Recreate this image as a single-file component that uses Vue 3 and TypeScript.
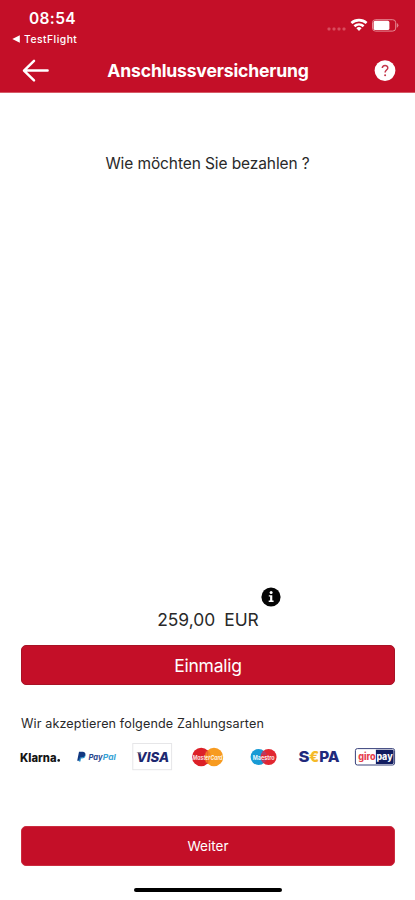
<script setup lang="ts">
import { ref } from 'vue'

const time = ref<string>('08:54')
const amount = ref<string>('259,00')
const currency = ref<string>('EUR')
</script>

<template>
  <main class="screen">
    <header class="header">
      <div class="status">
        <div class="status-left">
          <span class="time">{{ time }}</span>
          <span class="back-app">
            <svg width="8" height="8" viewBox="0 0 8 8"><path d="M0.3 4 7.8 .3V7.7Z" fill="#fff" /></svg>
            <span class="back-name">TestFlight</span>
          </span>
        </div>
        <svg class="indicators" width="74" height="16" viewBox="0 0 74 16">
          <g fill="#d94c5e">
            <rect x="1.5" y="11.5" width="3" height="3" rx="1" />
            <rect x="6.5" y="11.5" width="3" height="3" rx="1" />
            <rect x="11.5" y="11.5" width="3" height="3" rx="1" />
            <rect x="16.5" y="11.5" width="3" height="3" rx="1" />
          </g>
          <g fill="none" stroke="#fff" stroke-width="2.6">
            <path d="M25.4 7a11.4 11.4 0 0 1 15.2 0" />
            <path d="M28.4 10.2a6.9 6.9 0 0 1 9.2 0" />
          </g>
          <path d="M30.4 12.2a4 4 0 0 1 5.2 0L33 15Z" fill="#fff" />
          <rect x="46.5" y="3.7" width="23.2" height="11.4" rx="3" fill="none" stroke="#e58a94" />
          <rect x="47.6" y="4.8" width="15.8" height="9.2" rx="1.6" fill="#fff" />
          <path d="M71.2 7.5q2 1.8 0 3.8Z" fill="#e58a94" stroke="#e58a94" stroke-width=".6" />
        </svg>
      </div>
      <div class="nav">
        <svg width="28" height="24" viewBox="0 0 28 24">
          <path d="M13 1.8 3 11.6l10 9.8M3.2 11.6H26.6" fill="none" stroke="#fff" stroke-width="2.5" stroke-linecap="round" stroke-linejoin="round" />
        </svg>
        <h1 class="title">Anschlussversicherung</h1>
        <svg width="22" height="22" viewBox="0 0 22 22">
          <circle cx="11" cy="10.6" r="10.4" fill="#fff" />
          <path d="M8.3 8.1c.1-3.5 5.5-3.5 5.5-.2 0 2.1-2.7 2.2-2.7 4.5" fill="none" stroke="#c4354a" stroke-width="1.5" />
          <circle cx="11.1" cy="15.2" r="1" fill="#c4354a" />
        </svg>
      </div>
    </header>

    <p class="question">Wie möchten Sie bezahlen ?</p>

    <section class="payment">
      <div class="info">
        <svg width="20" height="20" viewBox="0 0 20 20">
          <circle cx="10" cy="10" r="9.6" fill="#050505" />
          <circle cx="10.1" cy="5.5" r="1.5" fill="#fff" />
          <path d="M7.8 8.2h3.5v5.4h1.3V15H7.7v-1.4h1.4V9.5H7.8Z" fill="#fff" />
        </svg>
      </div>
      <p class="price"><span>{{ amount }}</span><span>{{ currency }}</span></p>
      <button class="button once" type="button">Einmalig</button>
      <p class="accepted">Wir akzeptieren folgende Zahlungsarten</p>
      <div class="methods">
        <svg class="logo" viewBox="0 0 40 28">
          <text x="0" y="18.6" font-size="11.5" font-weight="800" fill="#151515" textLength="36.5" lengthAdjust="spacingAndGlyphs">Klarna</text>
          <circle cx="38.7" cy="17.4" r="1.3" fill="#151515" />
        </svg>
        <svg class="logo" viewBox="0 0 40 28">
          <path d="M3 8.8h4q3.2.5 2.2 3.7-.8 2.6-4.8 2.2l-.6 3H1.2Z" fill="#123881" />
          <path d="M9.4 11q.8 4.7-4.5 4.6l-.5 3H2.8l1.1-3.9Q8.6 15 9.4 11Z" fill="#168dcc" />
          <text x="12.5" y="17.2" font-size="7.4" font-style="italic" font-weight="700" fill="#27458d" textLength="14" lengthAdjust="spacingAndGlyphs">Pay</text>
          <text x="26.8" y="17.2" font-size="7.4" font-style="italic" font-weight="700" fill="#35a2d5" textLength="13" lengthAdjust="spacingAndGlyphs">Pal</text>
        </svg>
        <svg class="logo" viewBox="0 0 40 28">
          <rect x=".8" y=".5" width="38.8" height="26.2" fill="#fff" stroke="#e6e6e8" />
          <text x="4.6" y="19" font-size="13.6" font-style="italic" font-weight="800" fill="#1d2870" textLength="32.5" lengthAdjust="spacingAndGlyphs">VISA</text>
          <path d="M4.2 9h4l1.4 3.4Q7.6 10 4.2 9Z" fill="#8c8999" />
        </svg>
        <svg class="logo" viewBox="0 0 40 28">
          <circle cx="14.2" cy="14" r="9.2" fill="#dc2028" />
          <circle cx="27" cy="14" r="9.2" fill="#f79b20" />
          <path d="M20.5 7v14M18.5 9.1h4M17.8 11h5.5M17.8 17h5.5M18.5 19h4" stroke="#ed652b" stroke-width="1" />
          <text x="5.6" y="16.6" font-size="6.8" font-style="italic" font-weight="700" fill="#fff" fill-opacity=".85" textLength="30" lengthAdjust="spacingAndGlyphs">MasterCard</text>
        </svg>
        <svg class="logo" viewBox="0 0 40 28">
          <circle cx="15.6" cy="14" r="8" fill="#189bd5" />
          <circle cx="25.6" cy="14" r="8" fill="#e12731" />
          <path d="M18.8 9.2h3.6M17.8 11h5.6M17.8 17h5.6M18.8 18.8h3.6" stroke="#8654a1" stroke-width=".8" />
          <text x="9.8" y="16.5" font-size="6.8" font-weight="700" fill="#fff" fill-opacity=".9" textLength="21.8" lengthAdjust="spacingAndGlyphs">Maestro</text>
        </svg>
        <svg class="logo" viewBox="0 0 40 28">
          <g font-size="15" font-weight="800" fill="#20297b">
            <text x="-.6" y="19.4" textLength="11" lengthAdjust="spacingAndGlyphs">S</text>
            <text x="10" y="19.4" fill="#f5ba28" textLength="10.2" lengthAdjust="spacingAndGlyphs">€</text>
            <text x="20.2" y="19.4" textLength="20.5" lengthAdjust="spacingAndGlyphs">PA</text>
          </g>
        </svg>
        <svg class="logo" viewBox="0 0 40 28">
          <rect x=".4" y="5.6" width="39.2" height="16.4" rx="2" fill="#fff" stroke="#39427b" />
          <path d="M20.9 6.7h16.5q1.2 0 1.2 1.2v11.8q0 1.2-1.2 1.2H20.9Z" fill="#111c60" />
          <text x="3.2" y="16.8" font-size="9.2" font-weight="800" fill="#e6404d" textLength="17.5" lengthAdjust="spacingAndGlyphs">giro</text>
          <text x="21.4" y="16.8" font-size="9.2" font-weight="800" fill="#fff" textLength="16.2" lengthAdjust="spacingAndGlyphs">pay</text>
        </svg>
      </div>
    </section>

    <footer class="footer">
      <button class="button next" type="button">Weiter</button>
      <div class="home-bar"></div>
    </footer>
  </main>
</template>

<style>
body {
  background: #fff;
}
</style>

<style scoped>
.screen {
  box-sizing: border-box;
  width: 100%;
  height: 900px;
  display: flex;
  flex-direction: column;
  overflow: hidden;
  background: #fff;
  color: #292929;
  font-family: Inter, "Liberation Sans", sans-serif;
}
svg {
  display: block;
  flex: none;
}
p,
h1 {
  margin: 0;
  font-weight: 400;
  white-space: nowrap;
}
.header {
  box-sizing: border-box;
  height: 93px;
  flex: none;
  background: #c40f28;
  border-bottom: 1px solid #d65b67;
  color: #fff;
}
.status {
  height: 48px;
  display: flex;
  justify-content: space-between;
  padding: 0 15px 0 12px;
}
.status-left {
  display: flex;
  flex-direction: column;
  padding-top: 9px;
}
.time {
  padding-left: 17px;
  font-size: 15.5px;
  line-height: 20px;
  font-weight: 600;
  letter-spacing: .35px;
}
.back-app {
  display: flex;
  align-items: center;
  gap: 4px;
  height: 19px;
}
.back-name {
  font-size: 10.3px;
  font-weight: 500;
  letter-spacing: .5px;
}
.indicators {
  margin-top: 16px;
}
.nav {
  height: 45px;
  display: flex;
  align-items: center;
  padding: 0 19px 0 21px;
}
.title {
  flex: 1;
  padding-right: 7px;
  text-align: center;
  font-size: 17.6px;
  font-weight: 700;
  letter-spacing: -.18px;
}
.question {
  padding-top: 60px;
  text-align: center;
  font-size: 15.5px;
  line-height: 22px;
  letter-spacing: -.1px;
}
.payment {
  display: flex;
  flex-direction: column;
  margin-top: auto;
  padding: 0 20px;
}
.info {
  display: flex;
  justify-content: flex-end;
  padding-right: 114.5px;
}
.price {
  display: flex;
  justify-content: center;
  gap: 9px;
  padding: 1px 0 0 1px;
  font-size: 17.4px;
  line-height: 24px;
}
.button {
  display: flex;
  align-items: center;
  justify-content: center;
  height: 40px;
  padding: 0;
  border: 1px solid #a81225;
  border-radius: 5px;
  background: #c40f28;
  color: #fff;
  font-family: inherit;
}
.once {
  margin: 13px 0 0 1px;
  font-size: 17.5px;
  letter-spacing: -.25px;
}
.accepted {
  margin-top: 30px;
  padding-left: 1px;
  font-size: 12.6px;
  line-height: 18px;
  letter-spacing: .12px;
}
.methods {
  display: flex;
  justify-content: space-between;
  margin-top: 10px;
}
.logo {
  width: 40px;
  height: 28px;
  overflow: visible;
}
.footer {
  display: flex;
  flex-direction: column;
  padding: 55px 20px 8px 21px;
}
.next {
  font-size: 13.5px;
  border-color: #cb2c3f;
}
.home-bar {
  width: 148px;
  height: 4px;
  margin: 22px auto 0;
  border-radius: 2px;
  background: #000;
}
</style>
